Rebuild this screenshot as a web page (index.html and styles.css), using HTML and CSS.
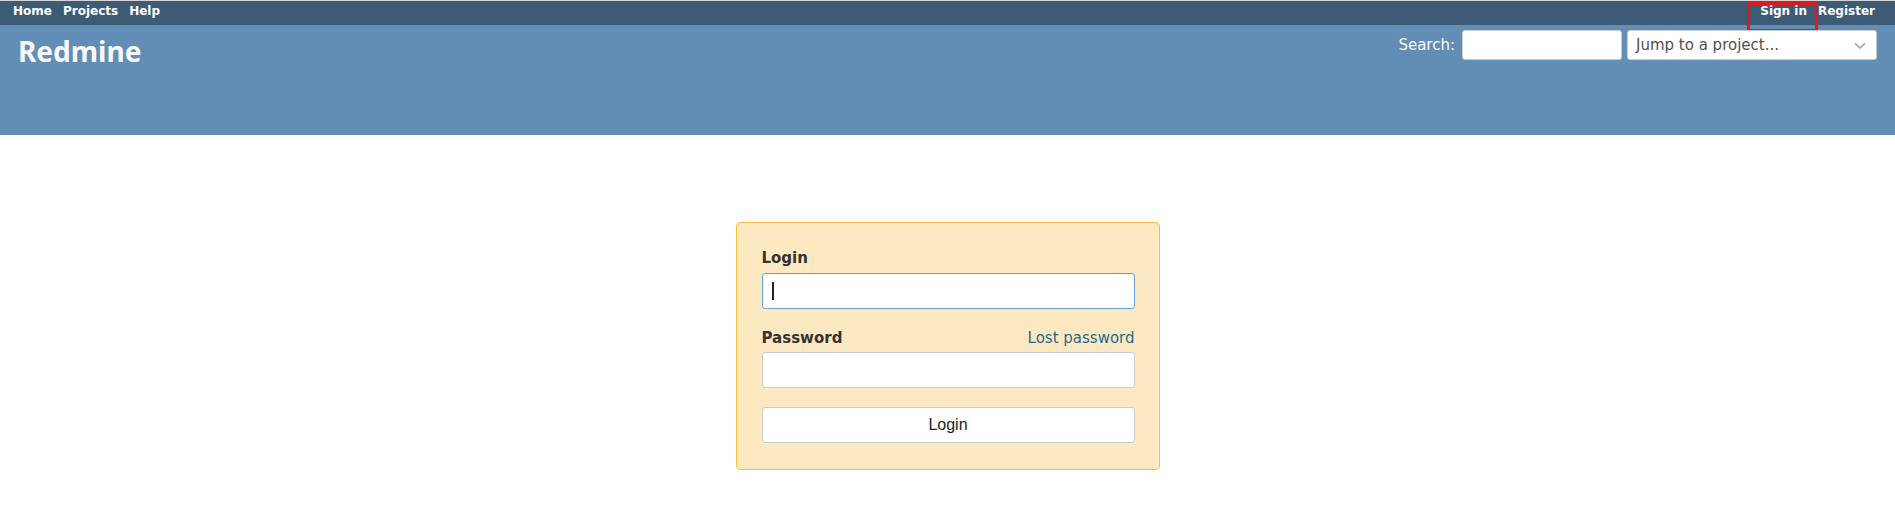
FILE: index.html
```html
<!DOCTYPE html>
<html lang="en">
<head>
    <meta charset="UTF-8">
    <title>Redmine</title>
    <link rel="stylesheet" href="styles.css">
</head>
<body>
<div class="top-menu">
    <ul class="menu-left">
        <li><a href="#">Home</a></li>
        <li><a href="#">Projects</a></li>
        <li><a href="#">Help</a></li>
    </ul>
    <ul class="menu-right">
        <li><a href="#" class="signin">Sign in</a></li>
        <li><a href="#">Register</a></li>
    </ul>
</div>
<div class="header">
    <h1>Redmine</h1>
    <div class="quick-search">
        <label for="q">Search:</label>
        <input type="text" id="q" class="search-input">
        <div class="jump">
            <span>Jump to a project...</span>
            <svg class="chevron" width="12" height="8" viewBox="0 0 12 8">
                <path d="M1 1.5 L6 6 L11 1.5" fill="none" stroke="#b0b0b0" stroke-width="1.8"/>
            </svg>
        </div>
    </div>
</div>
<div class="content">
    <div class="login-form">
        <label for="username" class="field-label">Login</label>
        <div class="field">
            <input type="text" id="username" class="text-input focused">
            <span class="caret"></span>
        </div>
        <div class="password-row">
            <label for="password" class="field-label">Password</label>
            <a href="#" class="lost">Lost password</a>
        </div>
        <div class="field">
            <input type="password" id="password" class="text-input">
        </div>
        <button class="login-btn">Login</button>
    </div>
</div>
</body>
</html>
```

FILE: styles.css
```css
* {
    padding: 0;
    margin: 0;
    box-sizing: border-box;
}

body {
    font-family: "DejaVu Sans", Verdana, sans-serif;
    font-size: 15px;
    color: #333;
    background: #fff;
}

a {
    text-decoration: none;
}

/* top menu */
.top-menu {
    height: 25px;
    border-top: 1px solid #d6d6d6;
    background: #3e5b76;
    display: flex;
    justify-content: space-between;
    padding: 2px 20px 0 13px;
    font-size: 12px;
    font-weight: bold;
    line-height: 16px;
}

.top-menu ul {
    list-style: none;
    display: flex;
}

.top-menu a {
    color: #fff;
}

.menu-left {
    gap: 11px;
}

.menu-right {
    gap: 11px;
}

.signin {
    position: relative;
}

.signin::after {
    content: "";
    position: absolute;
    left: -13px;
    right: -11px;
    top: -2px;
    height: 24px;
    border: 3px solid #e8141b;
    border-radius: 3px;
}

/* header */
.header {
    height: 110px;
    background: #628db6;
    color: #f8f8f8;
    display: flex;
    justify-content: space-between;
    align-items: flex-start;
    padding: 5px 18px 0 18px;
}

.header h1 {
    font-family: "Noto Sans", sans-serif;
    font-size: 28px;
    font-weight: bold;
    line-height: 36px;
    margin-top: 3px;
}

.quick-search {
    display: flex;
    align-items: center;
    gap: 5px;
}

.quick-search label {
    margin-right: 2px;
}

.search-input {
    width: 160px;
    height: 30px;
    border: 1px solid #ccc;
    border-radius: 3px;
    background: #fff;
}

.jump {
    position: relative;
    width: 250px;
    height: 30px;
    border: 1px solid #ccc;
    border-radius: 3px;
    background: #fff;
    color: #505050;
    padding-left: 8px;
    line-height: 28px;
}

.chevron {
    position: absolute;
    right: 10px;
    top: 11px;
}

/* login */
.content {
    padding-top: 87px;
    display: flex;
    justify-content: center;
}

.login-form {
    width: 424px;
    background: #fde9c1;
    border: 1px solid #fbbf3e;
    border-radius: 4px;
    padding: 25px 24px 26px 25px;
}

.field-label {
    display: block;
    font-weight: bold;
    line-height: 20px;
    margin-bottom: 5px;
}

.password-row {
    display: flex;
    justify-content: space-between;
    margin-top: 19px;
    margin-bottom: 4px;
}

.password-row .field-label {
    margin-bottom: 0;
}

.lost {
    color: #1d6997;
    line-height: 20px;
}

.field {
    position: relative;
}

.text-input {
    display: block;
    width: 100%;
    height: 36px;
    border: 1px solid #ccc;
    border-radius: 3px;
    background: #fff;
}

.text-input.focused {
    border-color: #5fa6d6;
}

.caret {
    position: absolute;
    left: 10px;
    top: 9px;
    width: 2px;
    height: 18px;
    background: #222;
}

.login-btn {
    display: block;
    width: 100%;
    height: 36px;
    margin-top: 19px;
    border: 1px solid #ccc;
    border-radius: 3px;
    background: #fff;
    font-family: "Liberation Sans", Arial, sans-serif;
    font-size: 16px;
    color: #222;
}
```
